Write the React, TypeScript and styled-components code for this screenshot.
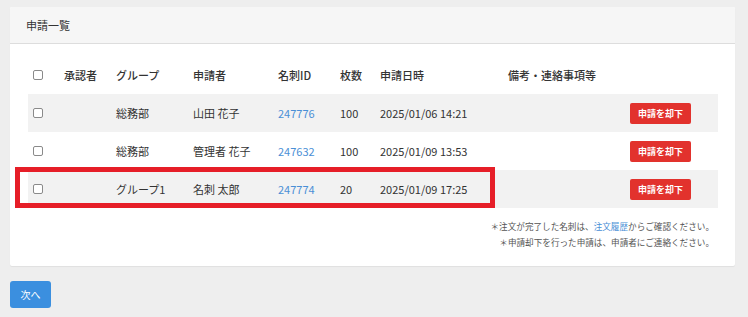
import React from "react";
import styled, { createGlobalStyle } from "styled-components";

const GlobalStyle = createGlobalStyle`
  html, body {
    margin: 0;
    padding: 0;
    background: #eeeeee;
    font-family: "Noto Sans CJK JP", "Noto Sans", sans-serif;
    color: #333333;
  }
`;

const Page = styled.div`
  padding: 7px 13px 0 10px;
`;

const Card = styled.section`
  background: #ffffff;
  border-radius: 2px;
  box-shadow: 0 1px 1px rgba(0, 0, 0, 0.06);
`;

const CardHeader = styled.header`
  height: 36px;
  display: flex;
  align-items: center;
  padding-left: 16px;
  background: #f6f6f6;
  border-bottom: 1px solid #dddddd;
  font-size: 11px;
  border-radius: 2px 2px 0 0;
`;

const CardBody = styled.div`
  padding: 12px 17px 16px 18px;
`;

const TableWrap = styled.div`
  position: relative;
`;

const Table = styled.table`
  width: 690px;
  table-layout: fixed;
  border-collapse: collapse;
  font-size: 11px;
`;

const Row = styled.tr<{ $striped?: boolean }>`
  height: 38px;
  background: ${({ $striped }) => ($striped ? "#f2f2f2" : "transparent")};
`;

const Th = styled.th`
  text-align: left;
  font-weight: 500;
  padding: 0 0 0 5px;
  white-space: nowrap;
`;

const Td = styled.td`
  padding: 0 0 0 5px;
  white-space: nowrap;
`;

const Check = styled.span`
  display: block;
  width: 8px;
  height: 8px;
  border: 1px solid #8a8a8a;
  border-radius: 2px;
  background: #ffffff;
`;

const IdLink = styled.a`
  color: #4a8fd6;
  text-decoration: none;
`;

const RejectButton = styled.button`
  width: 61px;
  height: 21px;
  border: none;
  border-radius: 2px;
  background: #e2322d;
  color: #ffffff;
  font-family: inherit;
  font-size: 9px;
  font-weight: 700;
  padding: 0;
  margin-top: 1px;
`;

const Highlight = styled.div`
  position: absolute;
  left: -13px;
  top: 111px;
  width: 470px;
  height: 31px;
  border: 5px solid #e61e28;
  pointer-events: none;
`;

const Notes = styled.div`
  margin-top: 10px;
  padding-right: 4px;
  text-align: right;
  font-size: 8.6px;
  line-height: 16px;
  color: #555555;
`;

const NoteLink = styled.a`
  color: #4a8fd6;
  text-decoration: none;
`;

const Footer = styled.div`
  padding-top: 14px;
`;

const NextButton = styled.button`
  width: 41px;
  height: 27px;
  border: none;
  border-radius: 3px;
  background: #3b8fdf;
  color: #ffffff;
  font-family: inherit;
  font-size: 10px;
  padding: 0;
`;

const columns = [31, 52, 77, 85, 62, 40, 128, 122, 93];

const rows = [
  { group: "総務部", applicant: "山田 花子", id: "247776", count: "100", date: "2025/01/06 14:21" },
  { group: "総務部", applicant: "管理者 花子", id: "247632", count: "100", date: "2025/01/09 13:53" },
  { group: "グループ1", applicant: "名刺 太郎", id: "247774", count: "20", date: "2025/01/09 17:25" },
];

export default function App() {
  return (
    <>
      <GlobalStyle />
      <Page>
        <Card>
          <CardHeader>申請一覧</CardHeader>
          <CardBody>
            <TableWrap>
              <Table>
                <colgroup>
                  {columns.map((w, i) => (
                    <col key={i} style={{ width: w }} />
                  ))}
                </colgroup>
                <thead>
                  <Row>
                    <Th>
                      <Check />
                    </Th>
                    <Th>承認者</Th>
                    <Th>グループ</Th>
                    <Th>申請者</Th>
                    <Th>名刺ID</Th>
                    <Th>枚数</Th>
                    <Th>申請日時</Th>
                    <Th>備考・連絡事項等</Th>
                    <Th />
                  </Row>
                </thead>
                <tbody>
                  {rows.map((r, i) => (
                    <Row key={r.id} $striped={i % 2 === 0}>
                      <Td>
                        <Check />
                      </Td>
                      <Td />
                      <Td>{r.group}</Td>
                      <Td>{r.applicant}</Td>
                      <Td>
                        <IdLink href="#">{r.id}</IdLink>
                      </Td>
                      <Td>{r.count}</Td>
                      <Td>{r.date}</Td>
                      <Td />
                      <Td>
                        <RejectButton>申請を却下</RejectButton>
                      </Td>
                    </Row>
                  ))}
                </tbody>
              </Table>
              <Highlight />
            </TableWrap>
            <Notes>
              <div>
                ＊注文が完了した名刺は、<NoteLink href="#">注文履歴</NoteLink>からご確認ください。
              </div>
              <div>＊申請却下を行った申請は、申請者にご連絡ください。</div>
            </Notes>
          </CardBody>
        </Card>
        <Footer>
          <NextButton>次へ</NextButton>
        </Footer>
      </Page>
    </>
  );
}
